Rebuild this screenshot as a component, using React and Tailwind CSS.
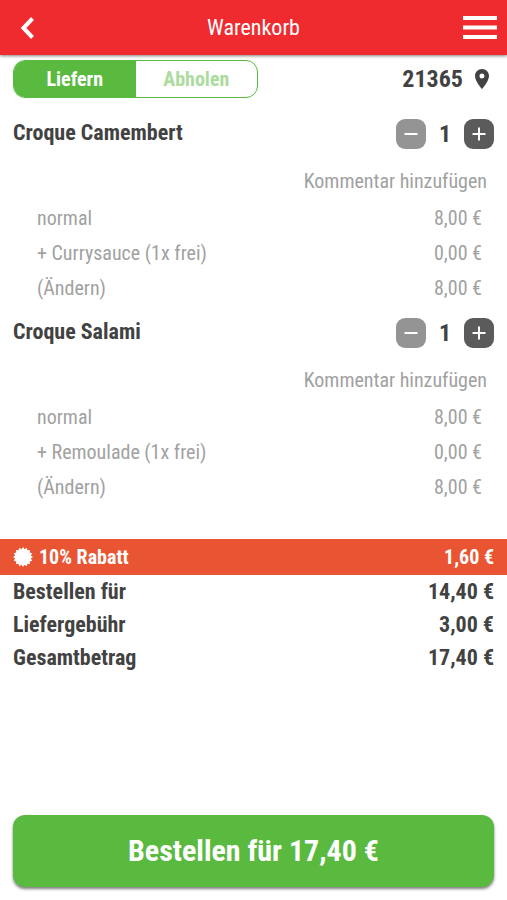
import React from "react";

const items = [
  {
    name: "Croque Camembert",
    rows: [
      ["normal", "8,00 €"],
      ["+ Currysauce (1x frei)", "0,00 €"],
    ],
    total: "8,00 €",
  },
  {
    name: "Croque Salami",
    rows: [
      ["normal", "8,00 €"],
      ["+ Remoulade (1x frei)", "0,00 €"],
    ],
    total: "8,00 €",
  },
];

const totals = [
  ["Bestellen für", "14,40 €"],
  ["Liefergebühr", "3,00 €"],
  ["Gesamtbetrag", "17,40 €"],
];

const burstPoints = Array.from({ length: 32 }, (_, i) => {
  const r = i % 2 === 0 ? 10 : 8;
  const a = (i * Math.PI) / 16;
  return `${(10 + r * Math.sin(a)).toFixed(2)},${(10 - r * Math.cos(a)).toFixed(2)}`;
}).join(" ");

function Item({ item }) {
  return (
    <section>
      <div className="flex h-12 items-center justify-between">
        <h2 className="mb-0.5 text-[22px] leading-7 font-bold">{item.name}</h2>
        <div className="flex items-center">
          <button
            type="button"
            aria-label="Weniger"
            className="flex size-[30px] items-center justify-center rounded-[9px] bg-[#949494]"
          >
            <svg viewBox="0 0 14 14" className="size-3.5" stroke="#fff" strokeWidth="2">
              <path d="M0.5 7h13" />
            </svg>
          </button>
          <span className="w-[38px] text-center text-2xl leading-7 font-bold">1</span>
          <button
            type="button"
            aria-label="Mehr"
            className="flex size-[30px] items-center justify-center rounded-[9px] bg-[#5b5b5b]"
          >
            <svg viewBox="0 0 14 14" className="size-3.5" stroke="#fff" strokeWidth="2">
              <path d="M0.5 7h13M7 0.5v13" />
            </svg>
          </button>
        </div>
      </div>
      <div className="text-xl text-[#a1a1a1]">
        <div className="flex h-[42px] items-center justify-end pt-1 pr-[7px]">
          <button type="button">Kommentar hinzufügen</button>
        </div>
        <ul className="pr-3 pl-6">
          {item.rows.map(([label, price]) => (
            <li key={label} className="flex h-[35px] items-center justify-between">
              <span>{label}</span>
              <span>{price}</span>
            </li>
          ))}
          <li className="flex h-[35px] items-center justify-between">
            <button type="button">(Ändern)</button>
            <span>{item.total}</span>
          </li>
        </ul>
      </div>
    </section>
  );
}

export default function App() {
  return (
    <div className="flex min-h-screen flex-col bg-white font-['Roboto_Condensed',Roboto,sans-serif] text-[#424242]">
      <header className="grid h-[55px] grid-cols-[1fr_auto_1fr] items-center bg-[#ef2b2f] pr-2.5 pl-5 text-white shadow-[0_1px_3px_rgba(0,0,0,0.5)]">
        <button type="button" aria-label="Zurück" className="justify-self-start">
          <svg viewBox="0 0 14 22" className="h-[22px] w-3.5" fill="none" stroke="currentColor" strokeWidth="4">
            <path d="M12.5 1.5L3.5 11l9 9.5" />
          </svg>
        </button>
        <h1 className="pr-2.5 text-[22px] leading-7">Warenkorb</h1>
        <button type="button" aria-label="Menü" className="justify-self-end">
          <svg viewBox="0 0 34 23" className="h-[23px] w-[34px]" stroke="currentColor" strokeWidth="4">
            <path d="M0 2h34M0 11.5h34M0 21h34" />
          </svg>
        </button>
      </header>

      <main className="flex flex-1 flex-col">
        <div className="flex items-center justify-between px-[13px] pt-[5px]">
          <div className="grid h-[38px] w-[245px] grid-cols-2 overflow-hidden rounded-xl border border-[#5aba40] bg-white text-xl font-bold">
            <button type="button" aria-pressed="true" className="bg-[#5aba40] text-white">
              Liefern
            </button>
            <button type="button" aria-pressed="false" className="text-[#acdb9e]">
              Abholen
            </button>
          </div>
          <button type="button" className="flex items-center gap-3 pr-[5px] text-2xl leading-7 font-bold">
            21365
            <svg viewBox="0 0 14 20" className="h-5 w-3.5" fill="currentColor">
              <path
                fillRule="evenodd"
                d="M7 0C3.1 0 0 3.1 0 7c0 5.2 7 13 7 13s7-7.800 7-13c0-3.900-3.100-7-7-7zm0 9.500a2.500 2.500 0 1 1 0-5 2.500 2.500 0 0 1 0 5z"
              />
            </svg>
          </button>
        </div>

        <div className="flex flex-col gap-1 px-[13px] pt-3">
          {items.map((item) => (
            <Item key={item.name} item={item} />
          ))}
        </div>

        <div className="mt-[35px] flex h-9 items-center bg-[#e95533] px-[13px] text-xl font-bold text-white">
          <svg viewBox="0 0 20 20" className="mr-1.5 size-5" fill="currentColor">
            <polygon points={burstPoints} />
          </svg>
          <span className="flex-1">10% Rabatt</span>
          <span>1,60 €</span>
        </div>

        <dl className="px-[13px] text-[22px] font-bold">
          {totals.map(([label, value]) => (
            <div key={label} className="flex h-[33px] items-center justify-between">
              <dt>{label}</dt>
              <dd>{value}</dd>
            </div>
          ))}
        </dl>
      </main>

      <footer className="px-[13px] pt-6 pb-[13px]">
        <button
          type="button"
          className="h-[72px] w-full rounded-xl bg-[#5aba40] text-3xl font-bold text-white shadow-[0_2px_3px_rgba(0,0,0,0.5)]"
        >
          Bestellen für 17,40 €
        </button>
      </footer>
    </div>
  );
}
